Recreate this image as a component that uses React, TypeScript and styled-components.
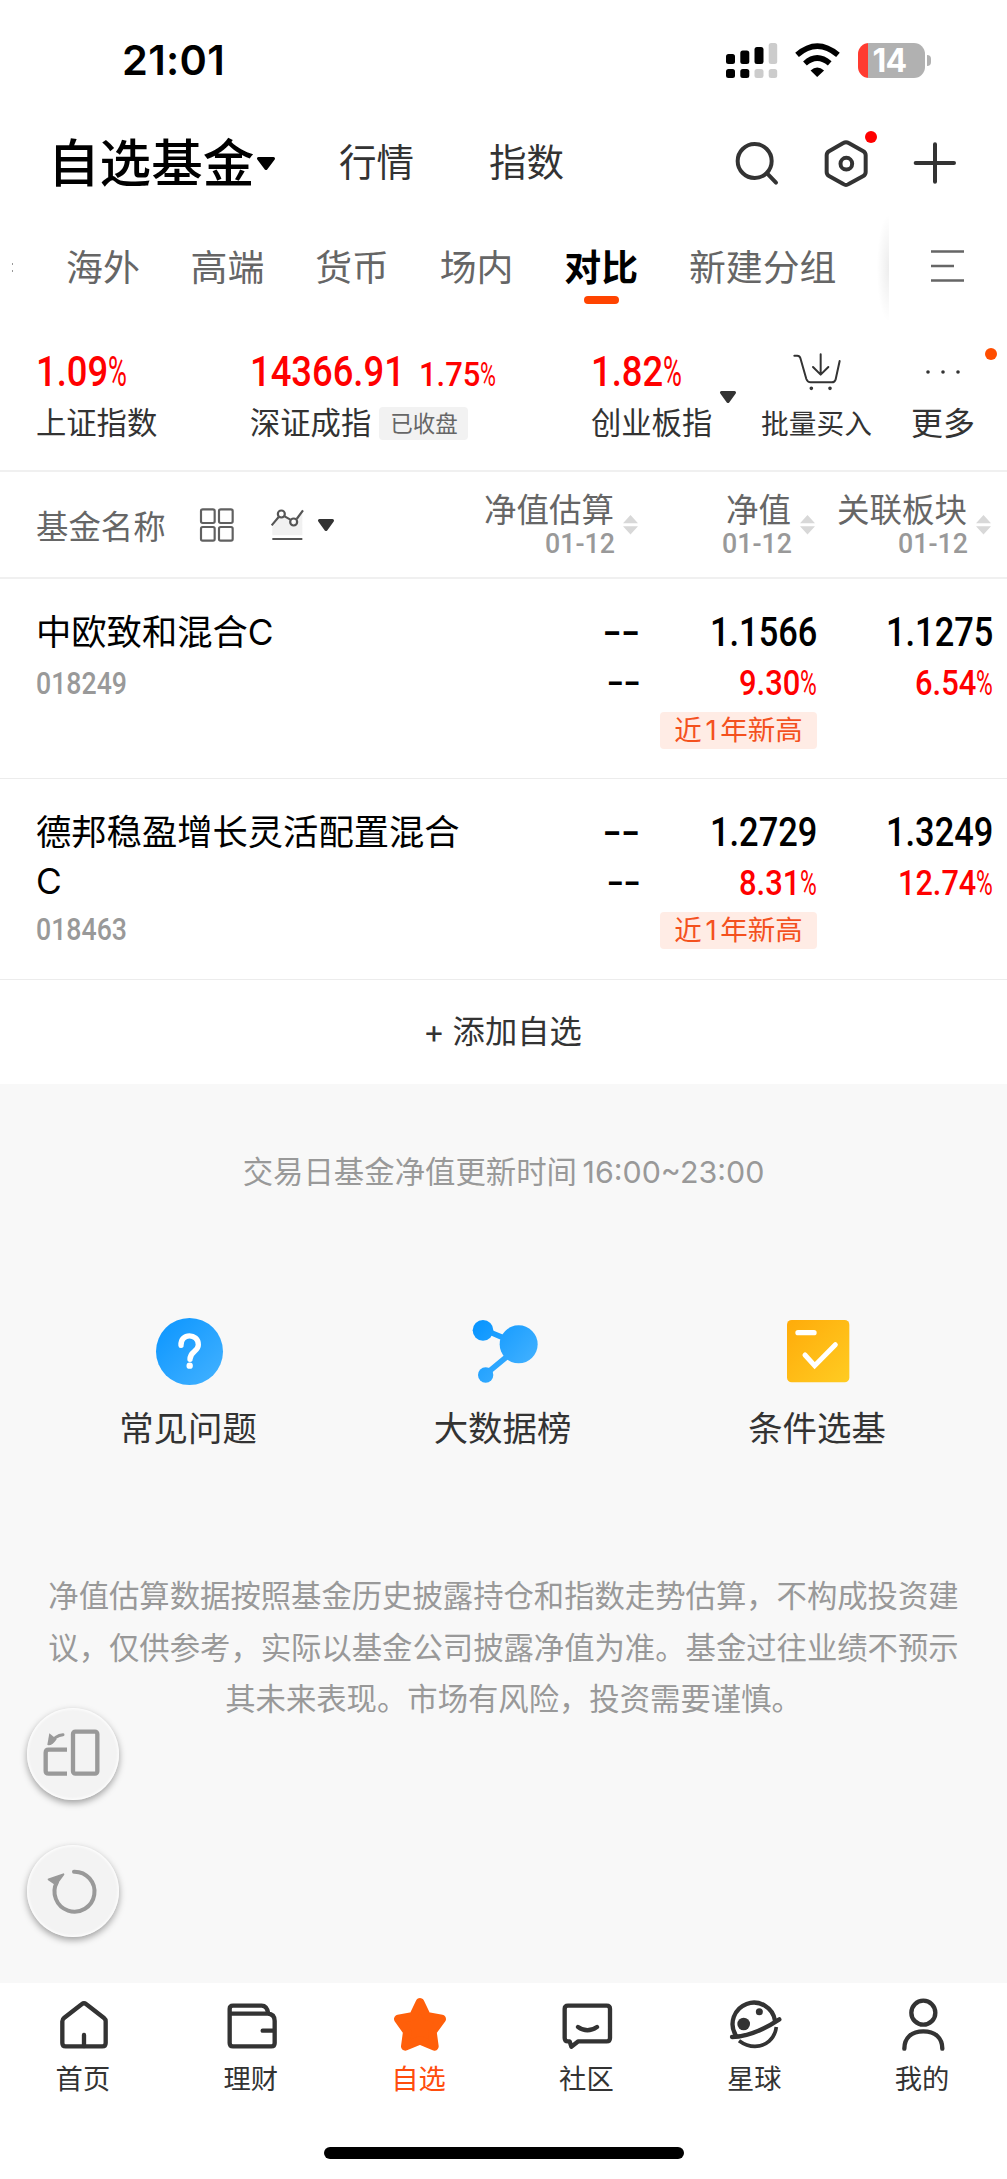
import React, { useLayoutEffect, useRef, useState } from "react";
import styled, { createGlobalStyle } from "styled-components";

const sans = `"Inter", "Noto Sans CJK SC", sans-serif`;
const numeric = `"Roboto", "Noto Sans CJK SC", sans-serif`;
const ink = "#333333";
const red = "#ff0000";
const orange = "#ff4d0d";

const GlobalStyle = createGlobalStyle`
  * { box-sizing: border-box; }
  body { margin: 0; background: #fff; font-family: ${sans}; color: ${ink}; }
  svg { display: block; flex: none; overflow: visible; }
`;

/* ---------- condensed numerals ---------- */

const FitBox = styled.span<{ $w: number }>`
  display: inline-block;
  width: ${(p) => p.$w}px;
  white-space: nowrap;
`;
const FitInner = styled.span<{ $size: number; $weight: number }>`
  display: inline-block;
  transform-origin: left center;
  font-family: ${numeric};
  font-size: ${(p) => p.$size}px;
  font-weight: ${(p) => p.$weight};
`;

function Fit({ w, size, weight = 500, children }: { w: number; size: number; weight?: number; children: string }) {
  const ref = useRef<HTMLSpanElement>(null);
  const [scale, setScale] = useState(1);
  useLayoutEffect(() => {
    if (ref.current) setScale(w / ref.current.offsetWidth);
  }, [w, children]);
  return (
    <FitBox $w={w}>
      <FitInner ref={ref} $size={size} $weight={weight} style={{ transform: `scaleX(${scale})` }}>
        {children}
      </FitInner>
    </FitBox>
  );
}

/* ---------- page and top bars ---------- */

const Page = styled.div`
  width: 1007px;
  height: 2179px;
  display: flex;
  flex-direction: column;
  overflow: hidden;
  background: #fff;
`;
const StatusBar = styled.div`
  height: 120px;
  display: flex;
  align-items: center;
  padding: 0 76px 0 122px;
`;
const Clock = styled.div`
  flex: 1;
  font-size: 41.5px;
  font-weight: 600;
  letter-spacing: 0.3px;
  line-height: 50px;
  color: #000;
`;
const StatusIcons = styled.div`
  display: flex;
  align-items: center;
  gap: 18px;
`;
const Battery = styled.div`
  display: flex;
  align-items: center;
  gap: 2px;
`;
const BatteryBody = styled.div`
  width: 67px;
  height: 35px;
  border-radius: 11px;
  background: linear-gradient(90deg, #ff3b30 0 10px, #b1b1b1 10px);
  color: #fff;
  font-size: 32px;
  font-weight: 700;
  line-height: 35px;
  letter-spacing: -0.7px;
  padding-left: 14.5px;
`;
const BatteryTip = styled.div`
  width: 4px;
  height: 11px;
  border-radius: 0 5px 5px 0;
  background: #b1b1b1;
`;

const TitleBar = styled.div`
  height: 86px;
  display: flex;
  align-items: center;
  padding: 0 50px 0 48px;
`;
const Title = styled.div`
  font-size: 51.6px;
  font-weight: 500;
  line-height: 60px;
  color: #000;
  width: 209px;
  white-space: nowrap;
`;
const TitleLink = styled.div<{ $gap: number }>`
  font-size: 37.5px;
  line-height: 60px;
  margin-left: ${(p) => p.$gap}px;
  white-space: nowrap;
`;
const TitleTools = styled.div`
  margin-left: auto;
  display: flex;
  align-items: center;
  gap: 45px;
`;
const Badged = styled.div`
  position: relative;
`;
const Dot = styled.i<{ $x: number; $y: number; $color: string }>`
  position: absolute;
  right: ${(p) => p.$x}px;
  top: ${(p) => p.$y}px;
  width: 12px;
  height: 12px;
  border-radius: 50%;
  background: ${(p) => p.$color};
`;

const Tabs = styled.div`
  height: 123px;
  display: flex;
  align-items: center;
  padding-left: 12px;
`;
const TabRemnant = styled.div`
  width: 54px;
  flex: none;
`;
const TabList = styled.div`
  display: flex;
  flex: none;
  gap: 50.8px;
`;
const Tab = styled.div<{ $active?: boolean }>`
  position: relative;
  font-size: 36.9px;
  line-height: 60px;
  white-space: nowrap;
  font-weight: ${(p) => (p.$active ? 700 : 400)};
  color: ${(p) => (p.$active ? "#000" : "#666")};
  &::after {
    content: "";
    display: ${(p) => (p.$active ? "block" : "none")};
    position: absolute;
    left: 50%;
    bottom: -6px;
    width: 35px;
    height: 8px;
    margin-left: -17.5px;
    border-radius: 4px;
    background: #ff4400;
  }
`;
const TabEdge = styled.div`
  flex: none;
  width: 12px;
  height: 106px;
  margin-left: auto;
  background: radial-gradient(ellipse at right center, rgba(0, 0, 0, 0.07), rgba(0, 0, 0, 0) 72%);
`;
const TabMenu = styled.div`
  flex: none;
  width: 118px;
  padding: 0 0 3px 42px;
`;

/* ---------- index strip ---------- */

const IndexBar = styled.div`
  height: 143px;
  display: grid;
  grid-template-columns: 214px 341px 129px 40px 113px 134px;
  padding: 25px 0 0 36px;
  border-bottom: 2px solid #f0f0f0;
`;
const IndexItem = styled.div`
  min-width: 0;
`;
const Quote = styled.div`
  height: 36px;
  display: flex;
  align-items: baseline;
  line-height: 36px;
  color: ${red};
`;
const QuoteGap = styled.span`
  width: 14px;
`;
const IndexName = styled.div`
  display: flex;
  align-items: center;
  margin-top: 17px;
  font-size: 30.3px;
  line-height: 33px;
  white-space: nowrap;
`;
const ClosedTag = styled.span`
  margin-left: 8px;
  padding: 0 11px;
  width: 89px;
  border-radius: 4px;
  background: #f2f2f2;
  color: #666;
  font-size: 22.5px;
  line-height: 33px;
`;
const CaretSlot = styled.div`
  padding-top: 37px;
`;
const Action = styled.div<{ $inset?: number }>`
  position: relative;
  display: flex;
  flex-direction: column;
  align-items: center;
  padding-left: ${(p) => p.$inset ?? 0}px;
`;
const ActionIcon = styled.div`
  height: 36px;
  display: flex;
  align-items: center;
`;
const ActionName = styled.div<{ $size: number }>`
  margin-top: 17px;
  font-size: ${(p) => p.$size}px;
  line-height: 34px;
  white-space: nowrap;
`;

/* ---------- fund table ---------- */

const TableHead = styled.div`
  height: 107px;
  display: grid;
  grid-template-columns: 428px 174px 177px 176px;
  align-items: center;
  padding-left: 36px;
  border-bottom: 2px solid #f0f0f0;
  color: #666;
`;
const HeadName = styled.div`
  display: flex;
  align-items: center;
  font-size: 32.4px;
  svg:nth-of-type(1) { margin-left: 34px; }
  svg:nth-of-type(2) { margin-left: 37px; }
  svg:nth-of-type(3) { margin-left: 14px; }
`;
const HeadCell = styled.div`
  display: flex;
  justify-content: flex-end;
  align-items: center;
  gap: 9px;
`;
const HeadText = styled.div`
  display: flex;
  flex-direction: column;
  align-items: flex-end;
  padding-top: 1px;
  font-size: 32.5px;
  line-height: 33px;
  white-space: nowrap;
`;
const HeadDate = styled.div`
  height: 30px;
  line-height: 30px;
  margin-right: -1px;
  color: #999;
`;
const Row = styled.div<{ $h: number }>`
  height: ${(p) => p.$h}px;
  display: grid;
  grid-template-columns: 428px 174px 178px 177px;
  padding: 29px 0 0 36px;
  border-bottom: 1px solid #ececec;
`;
const FundName = styled.div`
  min-height: 52px;
  font-size: 35.3px;
  line-height: 49px;
  color: #000;
`;
const FundCode = styled.div`
  line-height: 48px;
  height: 48px;
  color: #999;
`;
const ValueCell = styled.div<{ $outset?: number }>`
  display: flex;
  flex-direction: column;
  align-items: flex-end;
  margin-right: ${(p) => -(p.$outset ?? 0)}px;
  color: #000;
`;
const Value = styled.div`
  height: 49px;
  line-height: 49px;
`;
const Change = styled.div<{ $up?: boolean }>`
  height: 47px;
  line-height: 53px;
  display: flex;
  align-items: baseline;
  color: ${(p) => (p.$up ? red : "#000")};
`;
const HighTag = styled.div`
  width: 157px;
  height: 37px;
  margin: 8px 0 0;
  border-radius: 4px;
  background: #ffece5;
  color: #f4511e;
  font-size: 27.5px;
  line-height: 37px;
  text-align: center;
  word-spacing: -4px;
  white-space: nowrap;
`;
const AddRow = styled.div`
  height: 104px;
  display: flex;
  align-items: center;
  justify-content: center;
  gap: 8px;
  padding-right: 2px;
  font-size: 32.3px;
  line-height: 40px;
`;

/* ---------- grey area ---------- */

const Lower = styled.div`
  position: relative;
  height: 899px;
  background: #f8f8f8;
  color: #999;
`;
const UpdateNote = styled.div`
  padding-top: 68px;
  font-size: 30.4px;
  line-height: 40px;
  text-align: center;
  word-spacing: -3px;
`;
const Shortcuts = styled.div`
  display: grid;
  grid-template-columns: repeat(3, 314.5px);
  justify-content: center;
  padding: 126px 2px 0 0;
`;
const Shortcut = styled.div<{ $nudge: number }>`
  display: flex;
  flex-direction: column;
  align-items: center;
  gap: 22px;
  font-size: 34.4px;
  line-height: 44px;
  color: ${ink};
  > :first-child { margin-left: ${(p) => p.$nudge}px; }
`;
const Question = styled.div`
  width: 67px;
  height: 67px;
  border-radius: 50%;
  background: linear-gradient(135deg, #0a95ff, #44b2ff);
  display: flex;
  align-items: center;
  justify-content: center;
`;
const Disclaimer = styled.p`
  margin: 120px 48px 0;
  font-size: 30.35px;
  line-height: 51.6px;
  text-align: center;
  white-space: nowrap;
`;
const LastLine = styled.span`
  padding-left: 20px;
`;
const FloatStack = styled.div`
  position: absolute;
  left: 27px;
  top: 624px;
  display: flex;
  flex-direction: column;
  gap: 45px;
`;
const FloatButton = styled.div`
  width: 92px;
  height: 92px;
  border-radius: 50%;
  background: #f3f3f3;
  box-shadow: 0 3px 7px rgba(0, 0, 0, 0.36), inset 0 0 3px 1px #fff;
`;

/* ---------- bottom navigation ---------- */

const BottomNav = styled.nav`
  height: 196px;
  background: #fff;
  display: flex;
  flex-direction: column;
  align-items: center;
`;
const NavItems = styled.div`
  width: 100%;
  height: 164px;
  display: grid;
  grid-template-columns: repeat(6, 1fr);
  padding-top: 14px;
`;
const NavItem = styled.div<{ $active?: boolean }>`
  display: flex;
  flex-direction: column;
  align-items: center;
  font-size: 27.3px;
  line-height: 34px;
  gap: 10px;
  color: ${(p) => (p.$active ? orange : ink)};
`;
const NavLabel = styled.span`
  padding-right: 2px;
`;
const HomeIndicator = styled.div`
  width: 360px;
  height: 12px;
  border-radius: 6px;
  background: #000;
`;

/* ---------- icons ---------- */

const line = { fill: "none", stroke: ink, strokeLinecap: "round" as const, strokeLinejoin: "round" as const };

const Caret = ({ w, h, color = ink }: { w: number; h: number; color?: string }) => (
  <svg width={w} height={h} viewBox={`0 0 ${w} ${h}`}>
    <path d={`M1.5 1.5H${w - 1.5}L${w / 2} ${h - 1.5}Z`} fill={color} stroke={color} strokeWidth="3" strokeLinejoin="round" />
  </svg>
);

const Sorter = () => (
  <svg width="15" height="20" viewBox="0 0 15 20">
    <path d="M7.500 0L15 8.200H0ZM7.500 19.500L15 11.300H0Z" fill="#d8d8d8" />
  </svg>
);

const Signal = () => (
  <svg width="51" height="35" viewBox="0 0 51 35">
    <g fill="#000">
      <rect x="0" y="11" width="9" height="10" rx="2.500" />
      <rect x="14.300" y="7.500" width="9" height="13.500" rx="2.500" />
      <rect x="28.500" y="4" width="9" height="17" rx="2.500" />
      <rect x="0" y="26" width="9" height="9" rx="2.500" />
      <rect x="14.300" y="26" width="9" height="9" rx="2.500" />
    </g>
    <g fill="#cccccc">
      <rect x="42.700" y="0" width="8.500" height="21" rx="2.500" />
      <rect x="28.500" y="26" width="9" height="9" rx="2.500" />
      <rect x="42.700" y="26" width="8.500" height="9" rx="2.500" />
    </g>
  </svg>
);

const Wifi = () => (
  <svg width="45" height="33" viewBox="873 126 136 100">
    <path d="M879 159Q940 106 1003 159" fill="none" stroke="#000" strokeWidth="17" />
    <path d="M903 185Q940 152 978 185" fill="none" stroke="#000" strokeWidth="17" />
    <path d="M920 206Q940 188 961 206L940 226Z" fill="#000" />
  </svg>
);

const SearchIcon = () => (
  <svg width="44" height="44" viewBox="691 421 132 132" {...line} strokeWidth="12">
    <circle cx="750" cy="481" r="51" />
    <path d="M788 519L814 546" />
  </svg>
);

const HexIcon = () => (
  <svg width="44" height="47" viewBox="958 417 132 141" {...line} strokeWidth="12">
    <path d="M1016 426Q1024 421 1032 426L1076 451Q1083 455 1083 463V513Q1083 521 1076 525L1032 549Q1024 555 1016 549L973 525Q966 521 966 513V463Q966 455 973 451Z" />
    <circle cx="1025" cy="488" r="17.500" />
  </svg>
);

const PlusIcon = () => (
  <svg width="44" height="44" viewBox="1227 424 132 132" {...line} strokeWidth="12">
    <path d="M1293 434V546M1235 490H1350" />
  </svg>
);

const MenuIcon = () => (
  <svg width="33" height="32" viewBox="0 0 33 32">
    <path d="M0 1.500H33M0 16H23M0 30.500H33" stroke="#666" strokeWidth="2.300" />
  </svg>
);

const CartIcon = () => (
  <svg width="48" height="40" viewBox="867 78 144 120" {...line} strokeWidth="6">
    <path d="M871 89H880Q887 89 889 96L907 159Q911 169 920 169H984Q992 169 995 160L1007 105M950 85V145M927 123L950 146L973 123" />
    <circle cx="922" cy="187" r="2.500" />
    <circle cx="978" cy="187" r="2.500" />
  </svg>
);

const MoreDots = () => (
  <svg width="34" height="6" viewBox="0 0 34 6" fill={ink}>
    <circle cx="2" cy="3" r="1.800" />
    <circle cx="17" cy="3" r="1.800" />
    <circle cx="32" cy="3" r="1.800" />
  </svg>
);

const GridIcon = () => (
  <svg width="34" height="34" viewBox="599 538 102 102" fill="none" stroke="#606060" strokeWidth="6.500">
    <rect x="602" y="542" width="41" height="41" rx="5" />
    <rect x="656" y="542" width="41" height="41" rx="5" />
    <rect x="602" y="595" width="41" height="41" rx="5" />
    <rect x="656" y="595" width="41" height="41" rx="5" />
  </svg>
);

const TrendIcon = () => (
  <svg width="33" height="33" viewBox="812 540 99 99" fill="none" stroke="#555" strokeWidth="6.500">
    <path d="M816 596L843 562L880 586L906 556V622H816Z" fill="#f1f1f1" stroke="none" />
    <path d="M814 592L835 567M853 565L870 575M889 573L908 547M816 633H906" />
    <circle cx="843" cy="558" r="10.500" />
    <circle cx="880" cy="582" r="10.500" />
  </svg>
);

const QuestionMark = () => (
  <svg width="67" height="67" viewBox="48 56 201 201">
    <path d="M123 138C121 100 175 101 175 136C175 158 150 154 150 180" fill="none" stroke="#fff" strokeWidth="16" strokeLinecap="round" />
    <circle cx="149" cy="199" r="9.500" fill="#fff" />
  </svg>
);

const Molecule = () => (
  <svg width="67" height="67" viewBox="66 56 201 201">
    <defs>
      <linearGradient id="molecule" gradientUnits="userSpaceOnUse" x1="75" y1="70" x2="230" y2="210">
        <stop offset="0" stopColor="#0895ff" />
        <stop offset="1" stopColor="#40b0ff" />
      </linearGradient>
    </defs>
    <g fill="url(#molecule)">
      <circle cx="99" cy="93" r="31" />
      <circle cx="206" cy="135" r="57" />
      <circle cx="107" cy="227" r="23" />
      <path d="M118 89L160 106L154 122L114 105ZM166 165L178 177L120 225L110 211Z" />
    </g>
  </svg>
);

const Checklist = () => (
  <svg width="67" height="67" viewBox="1005 56 201 201">
    <defs>
      <linearGradient id="gold" x1="0" y1="0" x2="1" y2="1">
        <stop offset="0" stopColor="#ffab0a" />
        <stop offset="1" stopColor="#ffcc22" />
      </linearGradient>
    </defs>
    <rect x="1011" y="62" width="187" height="187" rx="14" fill="url(#gold)" />
    <path d="M1044 100H1092" stroke="#fff" strokeWidth="16" strokeLinecap="round" />
    <path d="M1065 167L1094 199L1156 136" fill="none" stroke="#fff" strokeWidth="15" strokeLinecap="round" />
  </svg>
);

const FoldIcon = () => (
  <svg width="92" height="92" viewBox="79 443 276 276" fill="none" stroke="#999" strokeWidth="13">
    <rect x="217" y="514" width="73" height="126" rx="7" />
    <path d="M199 568H144Q135 568 135 577V632Q135 640 144 640H199" />
    <path d="M187 523Q164 525 148 549" strokeWidth="9" strokeLinecap="round" />
    <path d="M146 519L140 553Q152 560 168 537Z" fill="#999" stroke="none" />
  </svg>
);

const ResetIcon = () => (
  <svg width="92" height="92" viewBox="79 854 276 276" fill="none" stroke="#999" strokeWidth="12">
    <path d="M220 934A60 60 0 1 1 169 965" strokeLinecap="round" />
    <path d="M144 957L188 942L166 972Z" fill="#999" strokeWidth="6" strokeLinejoin="round" />
  </svg>
);

const navFrame = (x: number) => ({ width: 56, height: 56, viewBox: `${x} 82 168 168`, ...line, strokeWidth: 13 });

const HomeIcon = () => (
  <svg {...navFrame(168)}>
    <path d="M187 155Q187 149 192 145L246 103Q252 98 258 103L312 145Q317 149 317 155V220Q317 230 307 230H197Q187 230 187 220Z" />
    <path d="M252 196V229" />
  </svg>
);
const WalletIcon = () => (
  <svg {...navFrame(671)}>
    <path d="M688 132V118Q688 108 698 108H784Q800 108 804 132M688 132H802Q823 133 823 154V220Q823 230 813 230H698Q688 230 688 220ZM787 183H823" />
  </svg>
);
const StarIcon = () => (
  <svg width={56} height={56} viewBox="1175 82 168 168">
    <path
      d="M1259 98L1279 140L1324 148L1296 186L1302 230L1259 212L1215 230L1221 186L1194 148L1239 140Z"
      fill="#ff5f0a"
      stroke="#ff5f0a"
      strokeWidth="26"
      strokeLinejoin="round"
    />
  </svg>
);
const ChatIcon = () => (
  <svg {...navFrame(168)}>
    <path d="M195 108H311Q321 108 321 118V205Q321 215 311 215H226L205 231L200 215H195Q185 215 185 205V118Q185 108 195 108ZM225 172Q253 192 282 172" />
  </svg>
);
const PlanetIcon = () => (
  <svg {...navFrame(671)}>
    <path d="M697 196A64 64 0 1 1 815 153" />
    <path d="M686 202Q750 201 828 149" />
    <path d="M707 213Q730 230 755 230C788 230 814 208 819 172" strokeWidth="11" strokeLinecap="butt" />
    <circle cx="721" cy="163" r="19" fill={ink} stroke="none" />
    <circle cx="768" cy="126" r="10.500" fill={ink} stroke="none" />
  </svg>
);
const PersonIcon = () => (
  <svg {...navFrame(1175)}>
    <circle cx="1260" cy="129" r="36" />
    <path d="M1203 237C1203 205 1224 185 1260 185S1317 205 1317 237" />
  </svg>
);

/* ---------- composed pieces ---------- */

function Percent({ value, w, size, signW }: { value: string; w: number; size: number; signW: number }) {
  return (
    <>
      <Fit w={w} size={size}>{value}</Fit>
      <Fit w={signW} size={size} weight={400}>%</Fit>
    </>
  );
}

function HeaderColumn({ label }: { label: string }) {
  return (
    <HeadCell>
      <HeadText>
        {label}
        <HeadDate><Fit w={70} size={27.500}>01-12</Fit></HeadDate>
      </HeadText>
      <Sorter />
    </HeadCell>
  );
}

type Fund = {
  name: string; code: string; h: number;
  net: string; netPct: string; netW: number;
  board: string; boardPct: string; boardW: number;
};

const funds: Fund[] = [
  { name: "中欧致和混合C", code: "018249", h: 200, net: "1.1566", netPct: "9.30", netW: 61, board: "1.1275", boardPct: "6.54", boardW: 61 },
  { name: "德邦稳盈增长灵活配置混合C", code: "018463", h: 201, net: "1.2729", netPct: "8.31", netW: 61, board: "1.3249", boardPct: "12.74", boardW: 78 },
];

function FundRow({ fund }: { fund: Fund }) {
  return (
    <Row $h={fund.h}>
      <div>
        <FundName>{fund.name}</FundName>
        <FundCode><Fit w={91} size={30.500}>{fund.code}</Fit></FundCode>
      </div>
      <ValueCell $outset={2}>
        <Value><Fit w={37} size={41}>--</Fit></Value>
        <Change><Fit w={33} size={36}>--</Fit></Change>
      </ValueCell>
      <ValueCell $outset={1}>
        <Value><Fit w={107} size={40.500}>{fund.net}</Fit></Value>
        <Change $up><Percent value={fund.netPct} w={fund.netW} size={35} signW={17} /></Change>
        <HighTag>近 1 年新高</HighTag>
      </ValueCell>
      <ValueCell>
        <Value><Fit w={107} size={40.500}>{fund.board}</Fit></Value>
        <Change $up><Percent value={fund.boardPct} w={fund.boardW} size={35} signW={17} /></Change>
      </ValueCell>
    </Row>
  );
}

const tabs = ["海外", "高端", "货币", "场内", "对比", "新建分组"];

const navItems = [
  { label: "首页", Icon: HomeIcon },
  { label: "理财", Icon: WalletIcon },
  { label: "自选", Icon: StarIcon },
  { label: "社区", Icon: ChatIcon },
  { label: "星球", Icon: PlanetIcon },
  { label: "我的", Icon: PersonIcon },
];

export default function App() {
  return (
    <Page lang="zh-CN">
      <GlobalStyle />
      <StatusBar>
        <Clock>21:01</Clock>
        <StatusIcons>
          <Signal />
          <Wifi />
          <Battery>
            <BatteryBody>14</BatteryBody>
            <BatteryTip />
          </Battery>
        </StatusIcons>
      </StatusBar>

      <TitleBar>
        <Title>自选基金</Title>
        <Caret w={18} h={13} color="#000" />
        <TitleLink $gap={64}>行情</TitleLink>
        <TitleLink $gap={75}>指数</TitleLink>
        <TitleTools>
          <SearchIcon />
          <Badged>
            <HexIcon />
            <Dot $x={-9} $y={-9} $color={red} />
          </Badged>
          <PlusIcon />
        </TitleTools>
      </TitleBar>

      <Tabs>
        <TabRemnant>
          <svg width="2" height="12" viewBox="0 0 2 12"><path d="M0.500 1V3M0.500 8V10" stroke="#999" /></svg>
        </TabRemnant>
        <TabList>
          {tabs.map((t) => <Tab key={t} $active={t === "对比"}>{t}</Tab>)}
        </TabList>
        <TabEdge />
        <TabMenu><MenuIcon /></TabMenu>
      </Tabs>

      <IndexBar>
        <IndexItem>
          <Quote><Percent value="1.09" w={72} size={42} signW={19} /></Quote>
          <IndexName>上证指数</IndexName>
        </IndexItem>
        <IndexItem>
          <Quote>
            <Fit w={155} size={42}>14366.91</Fit>
            <QuoteGap />
            <Percent value="1.75" w={61} size={34} signW={16} />
          </Quote>
          <IndexName>深证成指<ClosedTag>已收盘</ClosedTag></IndexName>
        </IndexItem>
        <IndexItem>
          <Quote><Percent value="1.82" w={72} size={42} signW={19} /></Quote>
          <IndexName>创业板指</IndexName>
        </IndexItem>
        <CaretSlot><Caret w={16} h={12} /></CaretSlot>
        <Action>
          <ActionIcon><CartIcon /></ActionIcon>
          <ActionName $size={27.700}>批量买入</ActionName>
        </Action>
        <Action $inset={6}>
          <ActionIcon><MoreDots /></ActionIcon>
          <ActionName $size={32}>更多</ActionName>
          <Dot $x={10} $y={-6} $color="#ff4d00" />
        </Action>
      </IndexBar>

      <TableHead>
        <HeadName>
          基金名称
          <GridIcon />
          <TrendIcon />
          <Caret w={16} h={12} />
        </HeadName>
        <HeaderColumn label="净值估算" />
        <HeaderColumn label="净值" />
        <HeaderColumn label="关联板块" />
      </TableHead>

      {funds.map((f) => <FundRow key={f.code} fund={f} />)}

      <AddRow><span>+</span><span>添加自选</span></AddRow>

      <Lower>
        <UpdateNote>交易日基金净值更新时间 16:00~23:00</UpdateNote>
        <Shortcuts>
          <Shortcut $nudge={2}><Question><QuestionMark /></Question>常见问题</Shortcut>
          <Shortcut $nudge={6}><Molecule />大数据榜</Shortcut>
          <Shortcut $nudge={3}><Checklist />条件选基</Shortcut>
        </Shortcuts>
        <Disclaimer>
          净值估算数据按照基金历史披露持仓和指数走势估算，不构成投资建<br />
          议，仅供参考，实际以基金公司披露净值为准。基金过往业绩不预示<br />
          <LastLine>其未来表现。市场有风险，投资需要谨慎。</LastLine>
        </Disclaimer>
        <FloatStack>
          <FloatButton><FoldIcon /></FloatButton>
          <FloatButton><ResetIcon /></FloatButton>
        </FloatStack>
      </Lower>

      <BottomNav>
        <NavItems>
          {navItems.map(({ label, Icon }) => (
            <NavItem key={label} $active={label === "自选"}>
              <Icon />
              <NavLabel>{label}</NavLabel>
            </NavItem>
          ))}
        </NavItems>
        <HomeIndicator />
      </BottomNav>
    </Page>
  );
}
